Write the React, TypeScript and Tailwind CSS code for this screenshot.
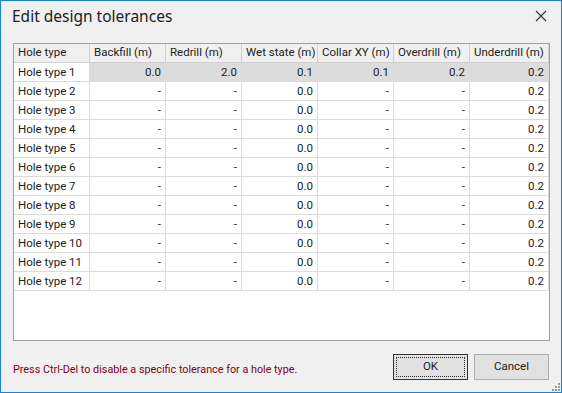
import React from "react";

const cols = ["Hole type", "Backfill (m)", "Redrill (m)", "Wet state (m)", "Collar XY (m)", "Overdrill (m)", "Underdrill (m)"];
const widths = [76, 76, 76, 76, 76, 76, 79];

const rows: string[][] = [
  ["Hole type 1", "0.0", "2.0", "0.1", "0.1", "0.2", "0.2"],
  ...Array.from({ length: 11 }, (_, i) => [`Hole type ${i + 2}`, "-", "-", "0.0", "-", "-", "0.2"]),
];

export default function App() {
  const font = { fontFamily: 'Roboto, "Noto Sans", sans-serif' };
  return (
    <div
      className="w-[562px] h-[393px] border border-[#1883d7] bg-[#f0f0f0] flex flex-col text-[#000] relative overflow-hidden"
      style={font}
    >
      <div className="h-[42px] flex items-start justify-between pl-[11px] pr-[14px] pt-[4px]">
        <span className="text-[15.5px] text-[#222]" style={{ fontFamily: '"Noto Sans", sans-serif' }}>
          Edit design tolerances
        </span>
        <svg width="12" height="12" viewBox="0 0 12 12" className="mt-[5px]">
          <path d="M1 1 L11 11 M11 1 L1 11" stroke="#333" strokeWidth="1.1" />
        </svg>
      </div>
      <div className="ml-[12px] w-[537px] h-[298px] border border-[#a0a0a0] bg-white text-[11.5px]">
        <div className="flex h-[19px] bg-[#f0f0f0] border-b border-[#d0d0d0]">
          {cols.map((c, i) => (
            <div
              key={c}
              className="h-full flex items-center pl-[4px] text-[#222] border-r border-[#d0d0d0] shrink-0 whitespace-nowrap"
              style={{ width: widths[i] }}
            >
              {c}
            </div>
          ))}
        </div>
        {rows.map((r, ri) => (
          <div key={ri} className="flex h-[19px] border-b border-[#dcdcdc]">
            {r.map((v, ci) => (
              <div
                key={ci}
                className={
                  "h-full flex items-center pt-[1px] text-[#222] border-r border-[#dcdcdc] shrink-0 whitespace-nowrap " +
                  (ci === 0 ? "pl-[4px] bg-white" : "justify-end pr-[4px] ") +
                  (ci > 0 && ri === 0 ? "bg-[#dcdcdc]" : "")
                }
                style={{ width: widths[ci] }}
              >
                {v}
              </div>
            ))}
          </div>
        ))}
      </div>
      <div className="flex items-center ml-[12px] mt-[13px] mr-[12px] text-[11.5px]">
        <span className="text-[#800020] flex-1 text-[10.8px] pt-[7px]">
          Press Ctrl-Del to disable a specific tolerance for a hole type.
        </span>
        <button className="w-[75px] h-[26px] border border-[#333] bg-[#e1e1e1] p-[2px] text-[#222]">
          <div className="w-full h-full border border-dotted border-[#333] flex items-center justify-center">OK</div>
        </button>
        <button className="ml-[6px] w-[75px] h-[26px] border border-[#adadad] bg-[#e1e1e1] text-[#222]">
          Cancel
        </button>
      </div>
      <svg width="8" height="8" viewBox="0 0 8 8" className="absolute right-[1px] bottom-[1px]">
        <rect x="6" y="0" width="2" height="2" fill="#9a9a9a" />
        <rect x="3" y="3" width="2" height="2" fill="#9a9a9a" />
        <rect x="6" y="3" width="2" height="2" fill="#9a9a9a" />
        <rect x="0" y="6" width="2" height="2" fill="#9a9a9a" />
        <rect x="3" y="6" width="2" height="2" fill="#9a9a9a" />
        <rect x="6" y="6" width="2" height="2" fill="#9a9a9a" />
      </svg>
    </div>
  );
}
